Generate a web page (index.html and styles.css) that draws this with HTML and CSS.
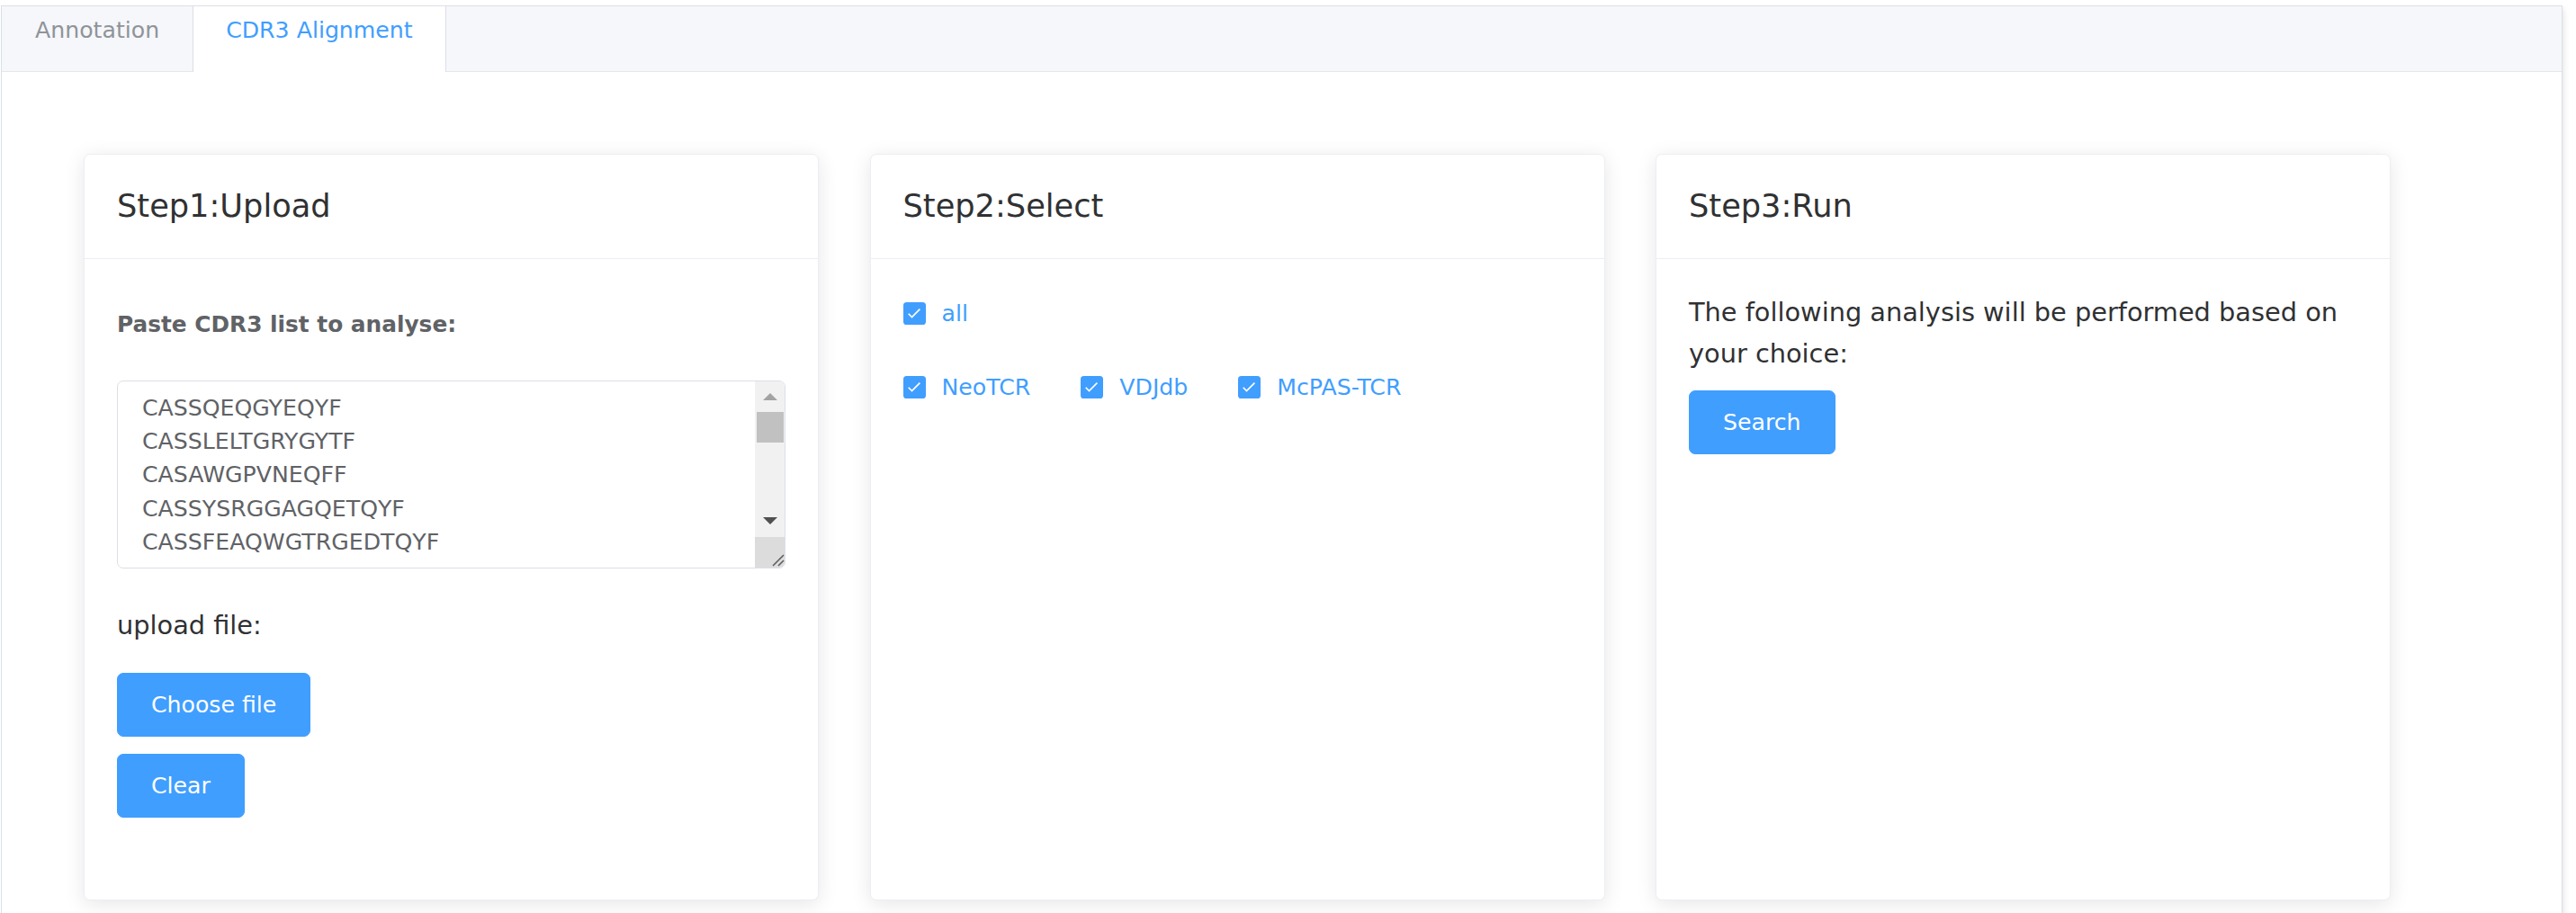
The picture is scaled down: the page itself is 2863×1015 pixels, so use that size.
FILE: index.html
```html
<!DOCTYPE html>
<html lang="en">
<head>
<meta charset="utf-8">
<title>CDR3 Alignment</title>
<link rel="stylesheet" href="styles.css">
</head>
<body>
<div class="tabs">
  <div class="tabs-header">
    <div class="tab">Annotation</div>
    <div class="tab tab-active">CDR3 Alignment</div>
  </div>
  <div class="tabs-body">
    <div class="card">
      <div class="card-header">Step1:Upload</div>
      <div class="card-body">
        <p class="paste-label">Paste CDR3 list to analyse:</p>
        <div class="ta-wrap">
          <textarea class="ta" spellcheck="false">CASSQEQGYEQYF
CASSLELTGRYGYTF
CASAWGPVNEQFF
CASSYSRGGAGQETQYF
CASSFEAQWGTRGEDTQYF</textarea>
          <div class="sb">
            <div class="sb-btn"><span class="tri-up"></span></div>
            <div class="sb-thumb"></div>
            <div class="sb-track"></div>
            <div class="sb-btn sb-btn-down"><span class="tri-down"></span></div>
            <div class="sb-resizer">
              <svg width="34" height="34" viewBox="0 0 34 34"><path d="M20 32 L32 20 M26 32 L32 26" stroke="#5f5f5f" stroke-width="1.6" fill="none"/></svg>
            </div>
          </div>
        </div>
        <p class="upload-label">upload file:</p>
        <button class="btn">Choose file</button>
        <button class="btn btn-clear">Clear</button>
      </div>
    </div>
    <div class="card">
      <div class="card-header">Step2:Select</div>
      <div class="card-body">
        <div class="cb-row cb-row-first">
          <label class="cb"><span class="cb-box"><svg width="25" height="25" viewBox="0 0 25 25"><polyline points="5.7,12.7 9.5,16.5 18.4,7.6" fill="none" stroke="#fff" stroke-width="1.6"/></svg></span><span class="cb-label">all</span></label>
        </div>
        <div class="cb-row cb-row-second">
          <label class="cb"><span class="cb-box"><svg width="25" height="25" viewBox="0 0 25 25"><polyline points="5.7,12.7 9.5,16.5 18.4,7.6" fill="none" stroke="#fff" stroke-width="1.6"/></svg></span><span class="cb-label">NeoTCR</span></label>
          <label class="cb"><span class="cb-box"><svg width="25" height="25" viewBox="0 0 25 25"><polyline points="5.7,12.7 9.5,16.5 18.4,7.6" fill="none" stroke="#fff" stroke-width="1.6"/></svg></span><span class="cb-label">VDJdb</span></label>
          <label class="cb"><span class="cb-box"><svg width="25" height="25" viewBox="0 0 25 25"><polyline points="5.7,12.7 9.5,16.5 18.4,7.6" fill="none" stroke="#fff" stroke-width="1.6"/></svg></span><span class="cb-label">McPAS-TCR</span></label>
        </div>
      </div>
    </div>
    <div class="card">
      <div class="card-header">Step3:Run</div>
      <div class="card-body">
        <p class="run-text">The following analysis will be performed based on your choice:</p>
        <button class="btn btn-search">Search</button>
      </div>
    </div>
  </div>
</div>
</body>
</html>
```
FILE: styles.css
```css
* { box-sizing: border-box; }

html, body {
  background: #ffffff;
}

body {
  margin: 6px 0 0 1px;
  font-family: "DejaVu Sans", Verdana, sans-serif;
  color: #303133;
}

.tabs {
  width: 2847px;
  border: 1px solid #dcdfe6;
  background: #ffffff;
  box-shadow: 0 4px 7px 0 rgba(0, 0, 0, 0.12), 0 0 11px 0 rgba(0, 0, 0, 0.04);
}

.tabs-header {
  display: flex;
  height: 73px;
  background: #f5f7fa;
  border-bottom: 1px solid #e4e7ed;
}

.tab {
  height: 73px;
  padding: 0 36px;
  font-size: 25.2px;
  line-height: 54px;
  color: #909399;
  border-left: 1px solid transparent;
  border-right: 1px solid transparent;
  white-space: nowrap;
}

.tab-active {
  color: #409eff;
  background: #ffffff;
  border-left-color: #dcdfe6;
  border-right-color: #dcdfe6;
  height: 73px;
  margin-bottom: -1px;
}

.tabs-body {
  display: flex;
  gap: 56.5px;
  padding: 91px 0 60px 91px;
}

.card {
  width: 817px;
  height: 830px;
  border: 1px solid #ebeef5;
  border-radius: 7px;
  background: #ffffff;
  box-shadow: 0 4px 22px 0 rgba(0, 0, 0, 0.1);
  overflow: hidden;
}

.card-header {
  padding: 32px 36px 33px;
  border-bottom: 1px solid #ebeef5;
  font-size: 35.2px;
  line-height: 50px;
  color: #303133;
}

.card-body {
  padding: 36px;
}

.paste-label {
  margin: 18px 0 0;
  font-size: 24.8px;
  line-height: 37.8px;
  font-weight: bold;
  color: #606266;
}

.ta-wrap {
  position: relative;
  margin-top: 43px;
  width: 100%;
  height: 209px;
}

.ta {
  display: block;
  width: 100%;
  height: 209px;
  padding: 11px 40px 0 27px;
  border: 1px solid #dcdfe6;
  border-radius: 7px;
  font-family: "DejaVu Sans", Verdana, sans-serif;
  font-size: 25.2px;
  line-height: 37.3px;
  color: #606266;
  background: #ffffff;
  resize: none;
  overflow: hidden;
  outline: none;
}

.sb {
  position: absolute;
  top: 1px;
  right: 1px;
  bottom: 1px;
  width: 33px;
  display: flex;
  flex-direction: column;
  background: #f1f1f1;
  border-top-right-radius: 6px;
  border-bottom-right-radius: 6px;
  overflow: hidden;
}

.sb-btn {
  height: 34px;
  flex: none;
  display: flex;
  align-items: center;
  justify-content: center;
}

.sb-btn-down {
  align-items: flex-start;
  padding-top: 12px;
}

.tri-up {
  width: 0;
  height: 0;
  border-left: 8px solid transparent;
  border-right: 8px solid transparent;
  border-bottom: 8px solid #a3a3a3;
}

.tri-down {
  width: 0;
  height: 0;
  border-left: 8px solid transparent;
  border-right: 8px solid transparent;
  border-top: 8px solid #505050;
}

.sb-thumb {
  height: 34px;
  flex: none;
  margin: 0 1px 0 2px;
  background: #c1c1c1;
}

.sb-track {
  flex: 1;
}

.sb-resizer {
  height: 34px;
  flex: none;
  background: #dcdcdc;
}

.sb-resizer svg {
  display: block;
}

.upload-label {
  margin: 42px 0 0;
  font-size: 28.8px;
  line-height: 43.2px;
  color: #303133;
}

.btn {
  display: block;
  height: 71px;
  padding: 0 37px;
  border: 1px solid #409eff;
  border-radius: 7px;
  background: #409eff;
  color: #ffffff;
  font-family: "DejaVu Sans", Verdana, sans-serif;
  font-size: 25.2px;
  line-height: 69px;
  white-space: nowrap;
  cursor: pointer;
}

.upload-label + .btn {
  margin-top: 31px;
}

.btn-clear {
  margin-top: 19px;
}

.cb-row {
  display: flex;
  align-items: center;
  height: 25px;
}

.cb-row-first {
  margin-top: 12px;
}

.cb-row-second {
  margin-top: 57px;
}

.cb {
  display: flex;
  align-items: center;
  margin-right: 56px;
  cursor: pointer;
}

.cb-box {
  width: 25px;
  height: 25px;
  border-radius: 3.6px;
  background: #409eff;
  flex: none;
}

.cb-box svg {
  display: block;
}

.cb-label {
  margin-left: 18px;
  font-size: 25.2px;
  line-height: 25.2px;
  color: #409eff;
  white-space: nowrap;
}

.run-text {
  margin: 0;
  font-size: 28.8px;
  line-height: 46px;
  color: #303133;
}

.btn-search {
  margin-top: 18px;
}
```
